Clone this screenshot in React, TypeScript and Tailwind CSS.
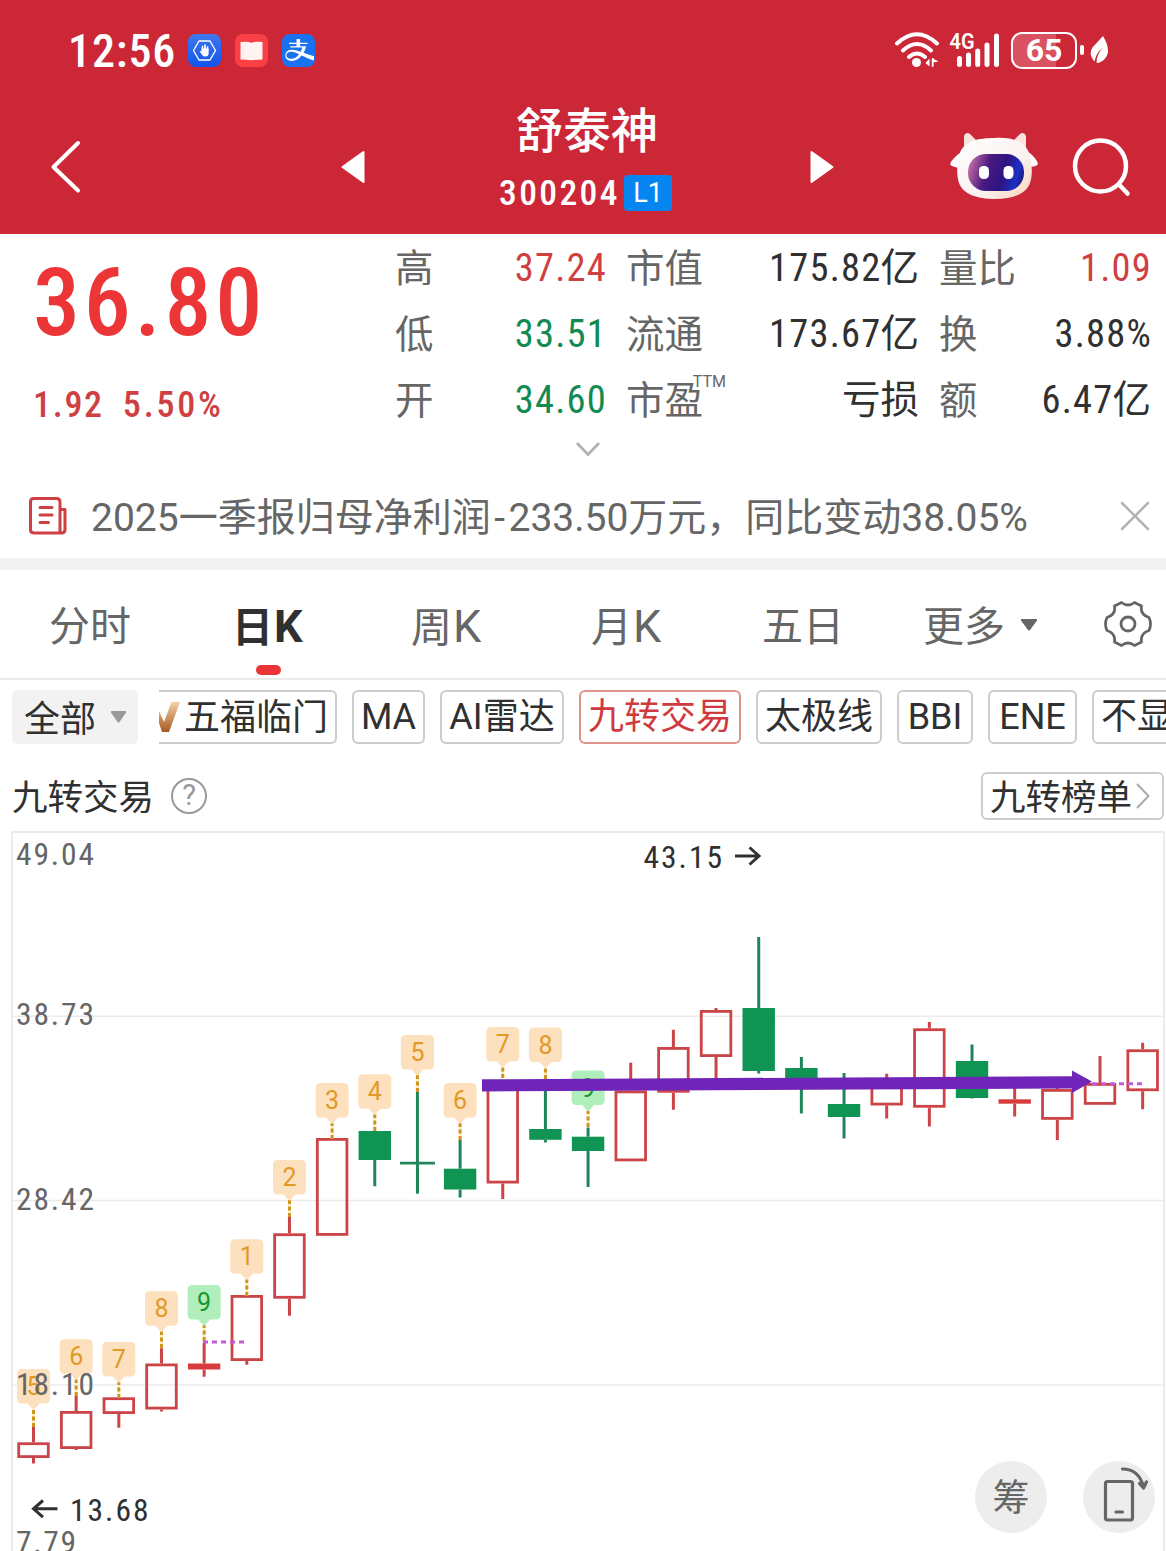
import { Fragment } from "react";
import clsx from "clsx";
import { BsAlipay } from "react-icons/bs";

interface ICandle {
    top: number;
    bottom: number;
    high: number;
    low: number;
    type: "up" | "down" | "solid" | "cross";
    tag?: string;
    tagY?: number;
    dotEnd?: number;
    green?: boolean;
}

const STEP = 42.66;
const FIRST_X = 33.5;
const OFFSET = 831;

const candles: ICandle[] = [
    { top: 1442.3, bottom: 1458, high: 1427, low: 1463.5, type: "up", tag: "5", tagY: 1369, dotEnd: 1427 },
    { top: 1411, bottom: 1449, high: 1396, low: 1450, type: "up", tag: "6", tagY: 1339.3, dotEnd: 1396 },
    { top: 1397.3, bottom: 1414, high: 1398, low: 1427.7, type: "up", tag: "7", tagY: 1342, dotEnd: 1398 },
    { top: 1363.5, bottom: 1409.5, high: 1348.3, low: 1411.5, type: "up", tag: "8", tagY: 1291.3, dotEnd: 1348 },
    { top: 1363.5, bottom: 1369.5, high: 1343, low: 1376.7, type: "solid", tag: "9", tagY: 1285, dotEnd: 1341, green: true },
    { top: 1295, bottom: 1361, high: 1296, low: 1364.7, type: "up", tag: "1", tagY: 1239.3, dotEnd: 1296 },
    { top: 1233.3, bottom: 1298.7, high: 1217, low: 1315.7, type: "up", tag: "2", tagY: 1160, dotEnd: 1217 },
    { top: 1138, bottom: 1235.8, high: 1139, low: 1235, type: "up", tag: "3", tagY: 1083, dotEnd: 1139 },
    { top: 1131, bottom: 1160, high: 1132, low: 1186.3, type: "down", tag: "4", tagY: 1074.3, dotEnd: 1131 },
    { top: 1162, bottom: 1164.5, high: 1091.7, low: 1193.5, type: "cross", tag: "5", tagY: 1035, dotEnd: 1092 },
    { top: 1168.7, bottom: 1189.5, high: 1140, low: 1197.5, type: "down", tag: "6", tagY: 1083, dotEnd: 1140 },
    { top: 1082, bottom: 1183.5, high: 1083, low: 1199, type: "up", tag: "7", tagY: 1027, dotEnd: 1078 },
    { top: 1129, bottom: 1139.8, high: 1080, low: 1142.5, type: "down", tag: "8", tagY: 1027.5, dotEnd: 1079 },
    { top: 1136.7, bottom: 1151, high: 1127.5, low: 1187, type: "down", tag: "9", tagY: 1070.5, dotEnd: 1127, green: true },
    { top: 1090.5, bottom: 1161.3, high: 1062.7, low: 1160, type: "up" },
    { top: 1047, bottom: 1092.7, high: 1029.7, low: 1109.7, type: "up" },
    { top: 1010, bottom: 1057, high: 1008, low: 1080, type: "up" },
    { top: 1008, bottom: 1071, high: 937, low: 1073.5, type: "down" },
    { top: 1068, bottom: 1080, high: 1057, low: 1113.5, type: "down" },
    { top: 1104, bottom: 1117, high: 1073, low: 1138.5, type: "down" },
    { top: 1084, bottom: 1105.5, high: 1073.7, low: 1118.5, type: "up" },
    { top: 1028.3, bottom: 1107.7, high: 1022, low: 1126.5, type: "up" },
    { top: 1061, bottom: 1098, high: 1044.5, low: 1098.5, type: "down" },
    { top: 1099.3, bottom: 1103.7, high: 1085, low: 1116.5, type: "solid" },
    { top: 1089, bottom: 1119.8, high: 1087, low: 1140, type: "up" },
    { top: 1083, bottom: 1104.8, high: 1056, low: 1104, type: "up" },
    { top: 1049.3, bottom: 1091.2, high: 1042.7, low: 1109.3, type: "up" },
];

const stats = [
    {
        className: "w-[211px]",
        rows: [
            { label: "高", value: "37.24", color: "text-[#d03f42]" },
            { label: "低", value: "33.51", color: "text-[#128a52]" },
            { label: "开", value: "34.60", color: "text-[#128a52]" },
        ],
    },
    {
        className: "w-[293px]",
        rows: [
            { label: "市值", value: "175.82", unit: "亿", color: "text-[#303030]" },
            { label: "流通", value: "173.67", unit: "亿", color: "text-[#303030]" },
            { label: "市盈", sup: "TTM", value: "", unit: "亏损", color: "text-[#303030]" },
        ],
    },
    {
        className: "w-[212px]",
        rows: [
            { label: "量比", value: "1.09", color: "text-[#d03f42]" },
            { label: "换", value: "3.88%", color: "text-[#303030]" },
            { label: "额", value: "6.47", unit: "亿", color: "text-[#303030]" },
        ],
    },
];

const indicators = [
    { name: "MA", width: "w-[73px]" },
    { name: "AI雷达", width: "w-[124px]" },
    { name: "九转交易", width: "w-[162px]", active: true },
    { name: "太极线", width: "w-[126px]" },
    { name: "BBI", width: "w-[76px]" },
    { name: "ENE", width: "w-[89px]" },
];

const StatusBar = () => (
    <div className="flex h-[100px] items-center pl-[68px] pr-[57px] text-white">
        <span className="w-[120px] pt-[2px] text-[46px] font-medium leading-none tracking-[0.900px] [font-stretch:75%]">12:56</span>
        <div className="flex gap-[14px]">
            <svg width="33" height="33" viewBox="0 0 33 33">
                <defs>
                    <linearGradient id="guard" x1="0" y1="0" x2="0" y2="1">
                        <stop offset="0" stopColor="#3f78ee" />
                        <stop offset="1" stopColor="#0f55ee" />
                    </linearGradient>
                </defs>
                <rect width="33" height="33" rx="8" fill="url(#guard)" />
                <path d="M11 7h11l5.500 9.500L22 26H11L5.500 16.500z" fill="none" stroke="#fff" strokeWidth="1.4" strokeLinejoin="round" />
                <path d="M14.500 17v-4.500M17 16v-5M19.500 17v-4" stroke="#fff" strokeWidth="1.700" strokeLinecap="round" />
                <path d="M13.600 14.500h7v5q0 3-3.200 3-2.200 0-3.200-1.600l-2.500-3.400q.6-1.200 1.900 0z" fill="#fff" />
            </svg>
            <svg width="33" height="33" viewBox="0 0 33 33">
                <rect width="33" height="33" rx="8" fill="#f94145" />
                <path d="M5.500 8q6-.5 8.500 0 2.500 1.600 5 0 3-.5 8.500 0v17.500q-6 0-11 .8-5-.8-11-.8z" fill="#fff4f2" />
            </svg>
            <div className="size-[33px] rounded-[8px] bg-[#1a72ee] p-px">
                <div className="rounded-[7px] bg-white">
                    <BsAlipay className="size-[31px] text-[#1a72ee]" />
                </div>
            </div>
        </div>
        <div className="ml-auto flex items-center">
            <svg width="46" height="38" viewBox="0 0 46 38" fill="none" stroke="#fff" strokeWidth="4" strokeLinecap="round">
                <path d="M3 12.500Q23-6 43 12.500M9 19.500Q23 6.500 37 19.500M15 26q8-7 16 0" />
                <circle cx="22.500" cy="31.500" r="4.500" fill="#fff" stroke="none" />
                <path d="M35.500 27.500v8l-4-3.500zM38.500 27.500v8M39 27.500l5.500 3-5.500 1z" fill="#fff" stroke="none" />
                <path d="M38.700 28v7" strokeWidth="1.800" />
            </svg>
            <svg className="ml-[9px] overflow-visible" width="53" height="38" viewBox="0 0 53 38">
                <text x="0.500" y="18" fontSize="22.500" fontWeight="600" fill="#fff" textLength="25" lengthAdjust="spacingAndGlyphs">4G</text>
                <path d="M10.500 27.500v6M19.500 24v9.500M28.700 20v13.500M38 14v19.500M47.500 5v28.500" stroke="#fff" strokeWidth="5" strokeLinecap="round" />
            </svg>
            <div className="ml-[9px] flex h-[37px] w-[66px] items-center justify-center rounded-[11px] border-[2.500px] border-white bg-[linear-gradient(90deg,#d95261_70%,#cc2737_70%)] text-[32px] font-bold leading-none">
                65
            </div>
            <div className="ml-[3px] h-[10px] w-[4px] rounded-full bg-white" />
            <svg className="ml-[6px]" width="19" height="30" viewBox="0 0 19 30">
                <path d="M13 1q6.500 11 4.500 18-2 6.500-9.500 9l-1.500-.3Q6.500 20 12.500 13 6 18 4.500 26.500-2 19 2.500 12.500 8 6.500 13 1z" fill="#fff" />
            </svg>
        </div>
    </div>
);

const Robot = () => (
    <svg width="92" height="70" viewBox="0 0 92 70">
        <defs>
            <linearGradient id="shell" x1="0" y1="0" x2="1" y2="1">
                <stop offset="0" stopColor="#fff" />
                <stop offset=".6" stopColor="#fbf1f1" />
                <stop offset="1" stopColor="#fbd3b8" />
            </linearGradient>
            <linearGradient id="face" x1="0" y1=".3" x2="1" y2=".5">
                <stop offset="0" stopColor="#c870a8" />
                <stop offset=".35" stopColor="#4b1a80" />
                <stop offset=".65" stopColor="#2e1482" />
                <stop offset=".9" stopColor="#1c30c8" />
                <stop offset="1" stopColor="#20207c" />
            </linearGradient>
        </defs>
        <path d="M15 17L15 4q2-5 6-2l9 9zM77 17L77 4q-2-5-6-2l-9 9z" fill="#fbe3e0" />
        <path d="M14 19Q4 25 1 32q1 3 11 4M78 19q9 6 11 13-1 3-11 3" fill="#fff" />
        <path d="M46 6C62 5 76 9 80 21c3 9 4 22 1 30-4 11-17 16-35 16S14 62 10 51c-3-9-2-21 1-30C15 9 29 6 46 6z" fill="url(#shell)" />
        <rect x="19" y="22" width="56" height="37" rx="18" fill="url(#face)" />
        <rect x="30" y="34" width="10" height="13" rx="4.500" fill="#fff" />
        <rect x="54.500" y="34" width="10" height="13" rx="4.500" fill="#fff" />
    </svg>
);

const NavBar = () => (
    <div className="flex h-[134px] items-center pl-[50px] pr-[34px] text-white">
        <svg width="32" height="56" viewBox="0 0 32 56" fill="none" stroke="#fff" strokeWidth="4" strokeLinecap="round" strokeLinejoin="round">
            <path d="M28 4L3.500 28 28 51.500" />
        </svg>
        <svg className="ml-[259px]" width="24" height="34" viewBox="0 0 24 34" fill="#fff" stroke="#fff" strokeWidth="2" strokeLinejoin="round">
            <path d="M1.500 17L22.500 2v30z" />
        </svg>
        <div className="ml-[131px] flex w-[180px] flex-col items-center pb-[10px]">
            <h1 className="pl-[2px] text-[47.500px] font-medium leading-[62px]">舒泰神</h1>
            <div className="flex w-full items-center gap-[6px] pl-[3px]">
                <span className="w-[119px] text-[35.500px] font-medium leading-[60px] tracking-[2.400px] [font-stretch:75%]">300204</span>
                <span className="flex h-[36px] w-[48px] items-center justify-center rounded-[4px] bg-[#0786f2] text-[27px] leading-none">L1</span>
            </div>
        </div>
        <svg className="ml-[134px]" width="24" height="34" viewBox="0 0 24 34" fill="#fff" stroke="#fff" strokeWidth="2" strokeLinejoin="round">
            <path d="M22.500 17L1.500 2v30z" />
        </svg>
        <div className="ml-auto flex items-center gap-[31px]">
            <Robot />
            <svg width="60" height="60" viewBox="0 0 60 60" fill="none" stroke="#fff" strokeWidth="4.500" strokeLinecap="round">
                <circle cx="28.500" cy="29" r="25.500" />
                <path d="M47 47.500l8.500 9" />
            </svg>
        </div>
    </div>
);

const QuotePanel = () => (
    <section className="flex h-[204px]">
        <div className="w-[395px] shrink-0 pl-[33px]">
            <div className="mt-[15px] text-[94px] font-medium leading-[108px] tracking-[3.800px] text-[#ec3536] [font-stretch:75%]">36.80</div>
            <div className="mt-[26px] flex gap-[19px] text-[36px] font-medium leading-[44px] tracking-[1.700px] text-[#cf4043] [font-stretch:75%]">
                <span>1.92</span>
                <span className="tracking-[2.800px]">5.50%</span>
            </div>
        </div>
        <div className="flex gap-[20px]">
            {stats.map((column, index) => (
                <div key={index} className={column.className}>
                    {column.rows.map((row) => (
                        <div key={row.label} className="flex h-[66px] items-center justify-between pt-[2px] text-[38.500px] leading-none">
                            <span className="relative pt-[2px] text-[#666]">
                                {row.label}
                                {"sup" in row && (
                                    <sup className="absolute -right-[23px] -top-[6px] text-[16px] leading-none">{row.sup}</sup>
                                )}
                            </span>
                            <span className={clsx("flex items-baseline", row.color)}>
                                {row.value && (
                                    <span className="-mr-px tracking-[1.200px] [font-stretch:75%]">{row.value}</span>
                                )}
                                {"unit" in row && <span>{row.unit}</span>}
                            </span>
                        </div>
                    ))}
                </div>
            ))}
        </div>
    </section>
);

const NewsBar = () => (
    <div className="flex h-[84px] items-center pl-[28px] pr-[16px] text-[#666]">
        <svg width="40" height="40" viewBox="0 0 40 40" fill="none" stroke="#cf4043" strokeWidth="3" strokeLinecap="round" strokeLinejoin="round">
            <path d="M32 37V6q0-3.500-3.500-3.500h-23Q2.500 2.500 2.500 6v27.500Q2.500 37 6 37h27.500q3.500 0 3.500-3.500V13.500h-5" />
            <path d="M12 11.500h12M12 19h12M12 26.500h8.500" />
        </svg>
        <p className="ml-[23px] whitespace-nowrap pt-[4px] text-[39px] leading-none">
            2025一季报归母净利润<span className="px-[3.500px]">-</span>233.50万元，同比变动38.05%
        </p>
        <svg className="ml-auto" width="30" height="30" viewBox="0 0 30 30" stroke="#b3b3b3" strokeWidth="2.500" strokeLinecap="round">
            <path d="M2 2l26 26M28 2L2 28" />
        </svg>
    </div>
);

const Tabs = () => (
    <nav className="flex h-[110px] items-center border-b-2 border-[#ebebeb] pl-[49px] pr-[14px] text-[41px] leading-none text-[#666]">
        <span className="w-[183px] pt-[6px]">分时</span>
        <span className="relative w-[179px] pt-[4px] font-bold text-[#303030]">
            日<span className="pl-px text-[45px]">K</span>
            <i className="absolute -bottom-[26px] left-[24px] h-[10px] w-[25px] rounded-[5px] bg-[#ec3536]" />
        </span>
        <span className="w-[180px] pt-[4px]">周<span className="pl-px text-[45px]">K</span></span>
        <span className="w-[171px] pt-[4px]">月<span className="pl-px text-[45px]">K</span></span>
        <span className="w-[161px] pt-[6px]">五日</span>
        <span className="pt-[6px]">更多</span>
        <svg className="ml-[15px] mt-[2px]" width="18" height="14" viewBox="0 0 18 14" fill="#666">
            <path d="M1.500 1h15q1 .5.500 1.500L10 12q-1 1-2 0L1 2.500Q.5 1.500 1.500 1z" />
        </svg>
        <svg className="ml-auto" width="48" height="48" viewBox="0 0 48 48" fill="none" stroke="#666" strokeWidth="2.800" strokeLinejoin="round">
            <path d="M17.500 2.500q6.500 5 13 0l7 3.500q-1.500 8.500 7.500 11.500 3 6.500 0 13-9 3-7.500 11.500l-7 3.500q-6.500-5-13 0l-7-3.500q1.500-8.500-7.500-11.500-3-6.500 0-13Q12 14.500 10.500 6z" />
            <circle cx="24" cy="24" r="7" />
        </svg>
    </nav>
);

const IndicatorBar = () => (
    <div className="mt-[10px] flex h-[54px] pl-[12px] text-[36px] leading-none text-[#303030]">
        <div className="flex w-[126px] shrink-0 items-center rounded-[5px] bg-[#f2f2f2] pl-[12px]">
            <span className="pt-[5px]">全部</span>
            <svg className="ml-[14px]" width="17" height="14" viewBox="0 0 17 14" fill="#999">
                <path d="M1.500 1h14q1 .5.500 1.500L9.500 12q-1 1-2 0L1 2.500Q.5 1.500 1.500 1z" />
            </svg>
        </div>
        <div className="ml-[21px] flex flex-1 gap-[15px] overflow-hidden whitespace-nowrap">
            <div className="flex w-[178px] shrink-0 items-center rounded-r-[6px] border-2 border-l-0 border-[#ccc]">
                <svg className="mr-[4px] shrink-0" width="21" height="32" viewBox="0 0 21 32">
                    <defs>
                        <linearGradient id="bronze" x1="0" y1="0" x2="0" y2="1">
                            <stop offset="0" stopColor="#f6cfa8" />
                            <stop offset="1" stopColor="#a85a22" />
                        </linearGradient>
                    </defs>
                    <path d="M0 10l5 11 7.500-20H21L10 31H3L0 22z" fill="url(#bronze)" />
                </svg>
                <span className="pt-px">五福临门</span>
            </div>
            {indicators.map((item) => (
                <div
                    key={item.name}
                    className={clsx(
                        "flex shrink-0 items-center justify-center rounded-[6px] border-2",
                        item.width,
                        item.active ? "border-[#dc9488] text-[#cf3a3e]" : "border-[#ccc]"
                    )}
                >
                    {item.name}
                </div>
            ))}
            <div className="flex w-[160px] shrink-0 items-center rounded-[6px] border-2 border-[#ccc] pl-[7px]">不显示</div>
        </div>
    </div>
);

const ChartTitle = () => (
    <div className="flex h-[87px] items-center pb-[1px] pl-[12px] pr-[2px] pt-[17px] text-[35.500px] leading-none text-[#303030]">
        <span className="pt-[6px]">九转交易</span>
        <span className="ml-[17px] flex size-[36px] items-center justify-center rounded-full border-2 border-[#999] text-[29px] text-[#999]">?</span>
        <div className="ml-auto flex h-[48px] w-[183px] items-center rounded-[6px] border-2 border-[#ccc] pl-[7px]">
            <span className="pt-[7px]">九转榜单</span>
            <svg className="ml-[4px]" width="14" height="28" viewBox="0 0 14 28" fill="none" stroke="#aaa" strokeWidth="2">
                <path d="M1 2l11.500 12L1 26" />
            </svg>
        </div>
    </div>
);

const Candle = ({ candle, x }: { candle: ICandle; x: number }) => {
    const { top, bottom, high, low, type } = candle;
    const color = type === "up" || type === "solid" ? "#cb4447" : "#0f9453";
    const wick = type === "up" || type === "solid" ? "#cb4447" : "#22855a";

    return (
        <g>
            <path d={`M${x} ${high}V${top}M${x} ${bottom}V${Math.max(low, bottom)}`} stroke={wick} strokeWidth="3" />
            {type === "up" && <rect x={x - 14.8} y={top + 1.400} width={29.600} height={bottom - top - 2.800} fill="none" stroke={color} strokeWidth="2.800" />}
            {type === "down" && <rect x={x - 16.2} y={top} width="32.400" height={bottom - top} fill={color} />}
            {type === "solid" && <rect x={x - 16.2} y={top} width="32.400" height={bottom - top} fill="#d93c3e" />}
            {type === "cross" && <path d={`M${x - 17.500} ${top + 1.200}h35M${x} ${top}V${low}`} stroke={wick} strokeWidth="2.800" />}
        </g>
    );
};

const Tag = ({ candle, x }: { candle: ICandle; x: number }) => {
    if (!candle.tag || !candle.tagY) return null;
    const y = candle.tagY;

    return (
        <g>
            <path d={`M${x} ${y + 41}V${candle.dotEnd}`} stroke="#fdeebb" strokeWidth="3" />
            <path d={`M${x} ${candle.dotEnd}V${y + 40}`} stroke="#cf9420" strokeWidth="3" strokeDasharray="4 2.500" />
            <path
                d={`M${x - 11.500} ${y}h23q5 0 5 5v24.500q0 5-5 5h-5.500l-6 6.500-6-6.500h-5.500q-5 0-5-5v-24.500q0-5 5-5z`}
                fill={candle.green ? "#b0eebb" : "#fde0bd"}
            />
            <text x={x} y={y + 26} fontSize="25" textAnchor="middle" fill={candle.green ? "#17962f" : "#e09a28"}>{candle.tag}</text>
        </g>
    );
};

const KLineChart = () => (
    <div className="relative h-[720px] overflow-hidden">
        <svg width="1166" height="720" viewBox={`0 ${OFFSET} 1166 720`}>
            <path d="M12 1560V832h1152v728" fill="none" stroke="#ebebeb" strokeWidth="2" />
            <path d="M12 1016.300h1152M12 1200.500h1152M12 1385h1152" stroke="#ebebeb" strokeWidth="1.500" />
            {candles.map((candle, index) => {
                const x = FIRST_X + index * STEP;
                return (
                    <Fragment key={index}>
                        <Candle candle={candle} x={x} />
                        <Tag candle={candle} x={x} />
                    </Fragment>
                );
            })}
            <path d="M203 1342h43M1092 1083.700h50" stroke="#c45bd6" strokeWidth="3" strokeDasharray="5 4" />
            <path d="M482 1079.300l590-3v-5.800l20 11-20 11.500v-4.500l-590 3z" fill="#7024b8" />

            <g className="[font-stretch:75%]" fontSize="31.500" fill="#666">
                <text x="16" y="864.500" textLength="78">49.04</text>
                <text x="16" y="1025" textLength="78">38.73</text>
                <text x="16" y="1210" textLength="78">28.42</text>
                <text x="16" y="1394.500" textLength="78">18.10</text>
                <text x="16" y="1553" textLength="60">7.79</text>
            </g>
            <g className="[font-stretch:75%]" fontSize="31.500" fill="#303030">
                <text x="643.500" y="868" textLength="78.500">43.15</text>
                <text x="70" y="1521" textLength="78.500">13.68</text>
            </g>
            <path d="M735 856h24M749.500 847.500l9.500 8.500-9.500 8.500M57.500 1508.800H34M43 1500.500l-9.500 8.300 9.500 8.300" fill="none" stroke="#303030" strokeWidth="3" />
        </svg>
        <button className="absolute left-[975px] top-[630px] flex size-[72px] items-center justify-center rounded-full bg-[#ededed] pt-[3px] text-[37px] leading-none text-[#666]">
            筹
        </button>
        <button className="absolute left-[1083px] top-[630px] size-[72px] rounded-full bg-[#ededed]">
            <svg width="72" height="72" viewBox="0 0 72 72" fill="none" stroke="#666" strokeWidth="3.200" strokeLinecap="round" strokeLinejoin="round">
                <rect x="22.500" y="20.500" width="27" height="38.500" rx="2" />
                <path d="M33 51h6.500M39.500 8Q56 8 60.500 26M56.500 22.500l4 4.500 3-6" />
            </svg>
        </button>
    </div>
);

export default function App() {
    return (
        <main className="h-[1551px] w-[1166px] overflow-hidden bg-white font-['Roboto','Noto_Sans_CJK_SC',sans-serif]">
            <header className="h-[234px] bg-[#cc2737]">
                <StatusBar />
                <NavBar />
            </header>
            <QuotePanel />
            <div className="flex h-[36px] justify-center pl-[10px] pt-[3px]">
                <svg width="26" height="16" viewBox="0 0 26 16" fill="none" stroke="#b3b3b3" strokeWidth="2.800">
                    <path d="M2 2l11 11.500L24 2" />
                </svg>
            </div>
            <NewsBar />
            <div className="h-[12px] bg-[#f2f2f2]" />
            <Tabs />
            <IndicatorBar />
            <ChartTitle />
            <KLineChart />
        </main>
    );
}
